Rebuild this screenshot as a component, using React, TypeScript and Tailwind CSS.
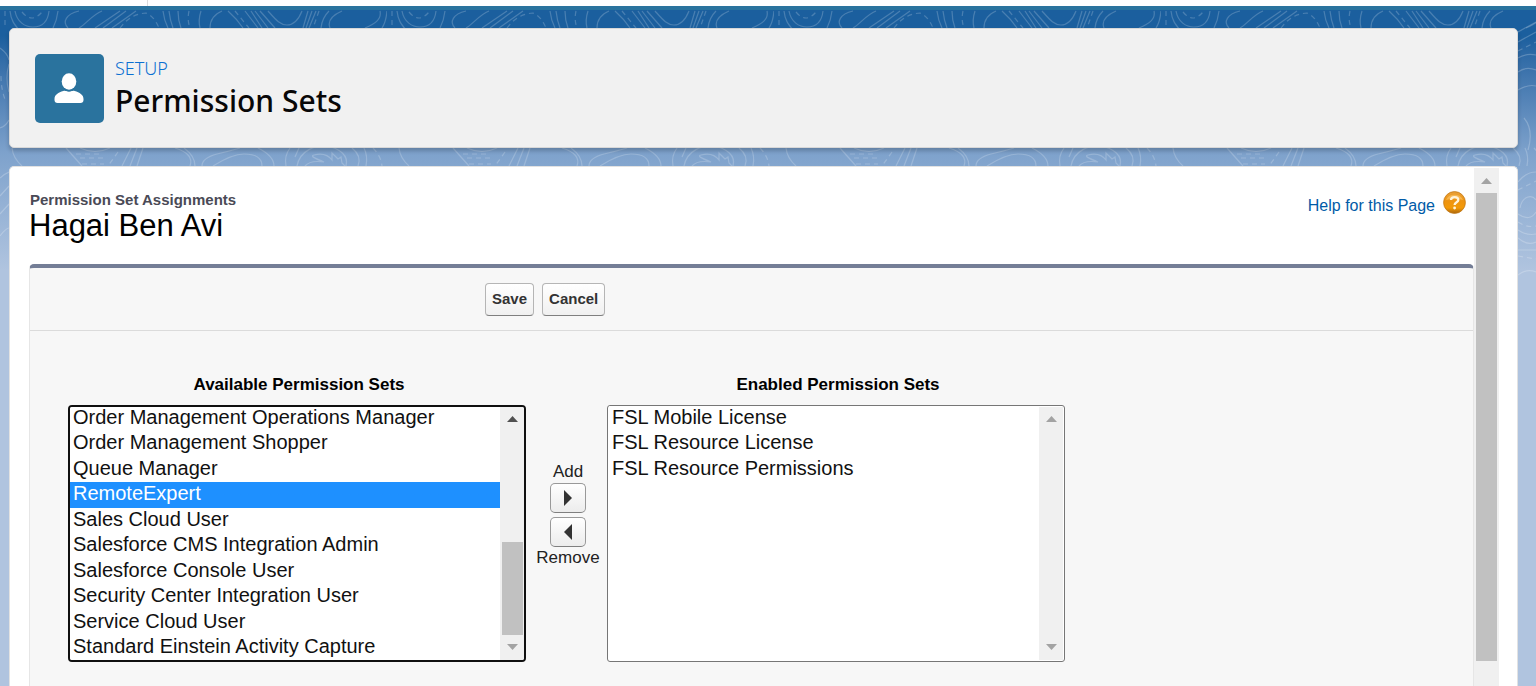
import React from 'react';

const available = [
  'Order Management Operations Manager',
  'Order Management Shopper',
  'Queue Manager',
  'RemoteExpert',
  'Sales Cloud User',
  'Salesforce CMS Integration Admin',
  'Salesforce Console User',
  'Security Center Integration User',
  'Service Cloud User',
  'Standard Einstein Activity Capture',
];

const enabled = ['FSL Mobile License', 'FSL Resource License', 'FSL Resource Permissions'];

/** Contour-line texture behind the cards, repeated across the window. */
function Contours() {
  return (
    <svg className="absolute inset-x-0 top-0 h-[300px] w-full" aria-hidden="true">
      <defs>
        <pattern id="contours" width="387" height="300" patternUnits="userSpaceOnUse">
          <g fill="none" stroke="#fff" strokeOpacity="0.2" strokeWidth="1.2">
            <path d="M10 11C11 20 14 24 19 30M15 11C17 22 25 27 33 27C44 27 48 20 49 11M58 11Q57 20 53 28M79 11C66 14 62 22 68 28M102 11C92 15 86 24 79 28M120 11L95 28M126 11L103 28M136 11L112 28" />
            <path d="M163 11Q164 20 168 28M169 11Q170 20 173 28M178 11Q178 20 181 28M201 11Q198 20 200 28M222 11Q210 16 210 28M228 11Q237 19 243 28M245 11L258 28M251 11L262 28M255 11L268 28M260 11L275 28" />
            <path d="M268 11C276 20 280 25 287 25C296 25 300 16 302 11M308 11L303 28M312 11L306 28M316 11L309 28M329 11Q322 18 321 28M342 11Q326 18 330 28M380 11C382 20 374 24 365 28M387 11Q386 22 382 28" />
            <path strokeDasharray="5 4" d="M5 11V28M22 12Q32 24 42 12M120 28Q130 14 146 13Q154 16 159 28M189 11Q187 20 190 28M235 11L249 28M319 11L313 28" />
            <path d="M12 148Q13 158 22 166M66 148L82 166M80 148Q95 155 110 148M131 148L122 166M137 148L130 166M143 148L137 166M175 148C188 152 193 158 190 166M184 148Q195 156 195 166M202 166Q202 158 217 154Q230 151 240 148M213 166Q232 154 244 154Q262 154 262 166M258 148Q274 156 274 166M290 148Q284 156 286 166M299 148L295 157" />
            <path d="M297 166C300 150 316 145 326 146C340 148 349 156 346 166M305 166Q310 160 324 162C314 158 310 156 314 155Q326 152 332 160V153L338 159L341 157L342 163L345 166M352 148Q362 156 358 166M364 148Q368 156 366 166" />
            <path strokeDasharray="5 4" d="M76 154H102M80 158H104M82 164H104M118 152L108 166M373 148Q381 156 382 166" />
          </g>
        </pattern>
      </defs>
      <rect width="100%" height="300" fill="url(#contours)" />
    </svg>
  );
}

function EdgeContours({ side }: { side: 'left' | 'right' }) {
  return side === 'left' ? (
    <svg className="absolute left-0 top-0 h-[300px] w-[9px]" aria-hidden="true">
      <g fill="none" stroke="#fff" strokeOpacity="0.22" strokeWidth="1.2">
        <path d="M0 48Q8 54 9 60M9 64Q5 78 9 92M0 128Q6 126 9 120M0 178Q4 174 9 172M0 196L9 186M0 214L9 204M0 236Q6 228 9 228" />
        <path strokeDasharray="5 4" d="M1 76Q1 90 6 102" />
      </g>
    </svg>
  ) : (
    <svg className="absolute right-0 top-0 h-[300px] w-[18px]" aria-hidden="true">
      <g fill="none" stroke="#fff" strokeOpacity="0.22" strokeWidth="1.2">
        <path d="M0 32L18 22M0 42L18 32M0 58Q8 53 18 55M0 72Q8 66 18 70M0 90Q10 84 18 86M6 118Q16 130 10 150M0 182Q8 172 18 172M2 208C4 196 14 194 18 200M0 214Q12 222 18 212M0 230Q9 236 18 234M0 238Q9 246 18 242M0 250H18M0 275Q9 268 18 272" />
        <path strokeDasharray="5 4" d="M0 51L18 42M0 190L18 181M0 222Q9 228 18 226M0 256L18 259" />
      </g>
    </svg>
  );
}

function Arrow({ down = false, dark = false }: { down?: boolean; dark?: boolean }) {
  return (
    <svg
      viewBox="0 0 11 6"
      className={`h-[6px] w-[11px] ${dark ? 'fill-[#505050]' : 'fill-[#a3a3a3]'}`}
      aria-hidden="true"
    >
      <path d={down ? 'M0 0H11L5.500 6Z' : 'M0 6H11L5.500 0Z'} />
    </svg>
  );
}

function ListScrollbar({ thumb = false }: { thumb?: boolean }) {
  return (
    <div className="flex w-6 shrink-0 flex-col items-center bg-[#f0f0f0] pb-[10px] pt-[9px]">
      <Arrow dark={thumb} />
      <div className="flex-1" />
      {thumb && <div className="mb-[9px] h-[93px] w-[21px] bg-[#c1c1c1]" />}
      <Arrow down />
    </div>
  );
}

const selectClass =
  '-mt-px block min-w-0 flex-1 appearance-none overflow-y-auto bg-white text-[20px] text-[#111] outline-none [scrollbar-width:none]';
const optionClass =
  'min-h-0 px-[3px] pt-0 pb-[2px] even:pb-[3px] checked:bg-linear-to-r checked:from-[#1e90ff] checked:to-[#1e90ff] checked:[-webkit-text-fill-color:white]';

const moveClass =
  'flex h-[30px] w-9 items-center justify-center rounded-[5px] border border-[#999] border-b-[#7f7f7f] bg-linear-to-b from-white to-[#ececec]';
const actionClass =
  'h-[33px] rounded-[4px] border border-[#b5b5b5] border-b-[#7f7f7f] bg-linear-to-b from-white to-[#f0f0f0] px-[6px] text-[15px] font-bold text-[#333]';

export default function App() {
  return (
    <div className="flex h-screen flex-col overflow-hidden bg-white font-['Liberation_Sans',Arial,sans-serif] text-black">
      <div className="flex h-[6px] shrink-0">
        <div className="w-[148px] border-r border-[#ddd]" />
      </div>
      <div className="relative flex min-h-0 flex-1 flex-col border-t-4 border-[#2a739e] bg-[#b0c4df]">
        <div className="absolute inset-x-0 top-0 h-[260px] bg-linear-to-b from-[#1b5f9e] from-10% via-[#7ea2cc] via-55% to-[#b0c4df]" />
        <div className="absolute inset-x-0 -top-[10px] h-[300px]">
          <div className="absolute inset-x-0 top-[10px] h-[156px] overflow-hidden">
            <div className="absolute inset-x-0 -top-[10px] h-[300px]">
              <Contours />
            </div>
          </div>
          <EdgeContours side="left" />
          <EdgeContours side="right" />
        </div>
        <div className="absolute inset-x-0 -top-1 h-1 bg-[#2a739e]" />

        <header className="relative ml-[9px] mr-[18px] mt-[18px] flex h-[120px] shrink-0 gap-[11px] rounded-[5px] border border-[#d8d8d8] bg-[#f1f1f1] px-[25px] pt-[25px] shadow-[0_3px_4px_rgba(0,0,0,0.2)]">
          <div className="flex size-[69px] items-center justify-center rounded-[5px] bg-[#2a739e] pb-px pr-px">
            <svg viewBox="0 0 30 30" className="size-[30px] fill-white" aria-hidden="true">
              <ellipse cx="15" cy="8.500" rx="7.300" ry="8.200" />
              <path d="M9.300 18C10.500 17.400 11.300 17.700 12.200 18.100C14 18.900 16 18.900 17.800 18.100C18.700 17.700 19.500 17.400 20.700 18C25.500 19.500 29.500 21.500 29.500 26V27C29.500 28.800 28.300 30 26.500 30H3.500C1.700 30 .5 28.800 .5 27V26C.5 21.500 4.500 19.500 9.300 18Z" />
            </svg>
          </div>
          <div className="font-['Noto_Sans','Open_Sans',sans-serif]">
            <p className="mt-1 text-[18px] font-light leading-5 text-[#0b70d1]">SETUP</p>
            <h1 className="mt-[3px] text-[30px] font-medium leading-[40px] text-[#080707]">Permission Sets</h1>
          </div>
        </header>

        <main className="relative ml-[9px] mr-[18px] mt-[18px] flex min-h-0 flex-1 rounded-t-[5px] border border-b-0 border-[#e2e2e2] bg-white">
          <div className="flex min-w-0 flex-1 flex-col pl-[19px]">
            <div className="flex h-[97px] shrink-0 justify-between pr-2 pt-6">
              <div>
                <p className="pl-px text-[15px] font-bold leading-[18px] text-[#4a4a56]">Permission Set Assignments</p>
                <h2 className="text-[31px] leading-[34px]">Hagai Ben Avi</h2>
              </div>
              <a href="#help" className="flex h-[23px] items-center gap-2 text-[16px] text-[#015ba7]">
                <span className="pt-[6px]">Help for this Page</span>
                <svg viewBox="0 0 23 23" className="size-[23px]" aria-hidden="true">
                  <defs>
                    <linearGradient id="orb" x1="0" y1="0" x2="0" y2="1">
                      <stop offset="0" stopColor="#e9a13a" />
                      <stop offset="0.450" stopColor="#ee9410" />
                      <stop offset="0.750" stopColor="#f39a08" />
                      <stop offset="1" stopColor="#a9660c" />
                    </linearGradient>
                  </defs>
                  <circle cx="11.500" cy="11.500" r="10.900" fill="url(#orb)" stroke="#c47a18" strokeWidth="0.800" />
                  <path d="M3 9A9 8 0 0 1 20 9Q12 6 3 9Z" fill="#ffd27d" fillOpacity="0.500" />
                  <path d="M8 9C8 5.200 15.300 5.200 15.300 9C15.300 11.300 11.600 11.200 11.600 14" fill="none" stroke="#fff4dc" strokeWidth="2.300" />
                  <circle cx="11.600" cy="17" r="1.400" fill="#fff4dc" />
                </svg>
              </a>
            </div>

            <section className="flex-1 rounded-t-[5px] border-x border-t-4 border-x-[#e6e6e6] border-t-[#747e96] bg-[#f7f7f7]">
              <div className="flex h-[63px] gap-2 border-b border-[#dbdbdb] pl-[455px] pt-[15px]">
                <button type="button" className={actionClass}>Save</button>
                <button type="button" className={actionClass}>Cancel</button>
              </div>

              <div className="flex pl-[38px] pt-[44px]">
                <div className="w-[458px]">
                  <label htmlFor="available" className="mb-[10px] block pl-1 text-center text-[17px] font-bold leading-5">
                    Available Permission Sets
                  </label>
                  <div className="flex h-[257px] overflow-hidden rounded-[4px] border-2 border-[#101010] bg-white">
                    <select id="available" multiple size={10} defaultValue={['RemoteExpert']} className={selectClass}>
                      {available.map((name) => (
                        <option key={name} value={name} className={optionClass}>{name}</option>
                      ))}
                    </select>
                    <ListScrollbar thumb />
                  </div>
                </div>

                <div className="flex w-[81px] flex-col items-center pl-[3px] pt-[87px] text-[17px] leading-5 text-[#222]">
                  <span id="add-label" className="mb-px">Add</span>
                  <button type="button" aria-labelledby="add-label" className={moveClass}>
                    <svg viewBox="0 0 8 16" className="h-4 w-2 fill-[#333]" aria-hidden="true"><path d="M0 0L8 8L0 16Z" /></svg>
                  </button>
                  <button type="button" aria-labelledby="remove-label" className={`mt-1 ${moveClass}`}>
                    <svg viewBox="0 0 8 16" className="h-4 w-2 fill-[#333]" aria-hidden="true"><path d="M8 0L0 8L8 16Z" /></svg>
                  </button>
                  <span id="remove-label" className="mt-px">Remove</span>
                </div>

                <div className="w-[458px]">
                  <label htmlFor="enabled" className="mb-[10px] block pl-1 text-center text-[17px] font-bold leading-5">
                    Enabled Permission Sets
                  </label>
                  <div className="flex h-[257px] overflow-hidden rounded-[3px] border border-[#767676] bg-white p-px">
                    <select id="enabled" multiple size={10} className={selectClass}>
                      {enabled.map((name) => (
                        <option key={name} value={name} className={optionClass}>{name}</option>
                      ))}
                    </select>
                    <ListScrollbar />
                  </div>
                </div>
              </div>
            </section>
          </div>

          <div className="mr-[18px] mt-px flex w-[25px] shrink-0 flex-col items-center bg-[#f0f0f0] pt-[10px]">
            <Arrow />
            <div className="mt-[9px] h-[468px] w-[21px] bg-[#c1c1c1]" />
          </div>
        </main>
      </div>
    </div>
  );
}
